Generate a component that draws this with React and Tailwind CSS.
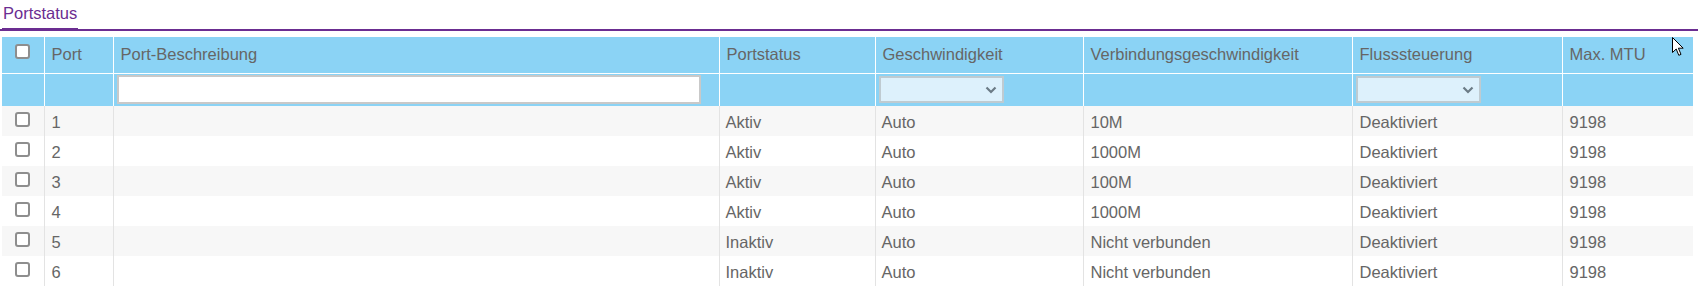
import React from "react";

const cols = [42, 69, 606, 156, 208, 269, 210, 131];

const headers = [
  "",
  "Port",
  "Port-Beschreibung",
  "Portstatus",
  "Geschwindigkeit",
  "Verbindungsgeschwindigkeit",
  "Flusssteuerung",
  "Max. MTU",
];

const ports = [
  { port: "1", status: "Aktiv", speed: "Auto", link: "10M" },
  { port: "2", status: "Aktiv", speed: "Auto", link: "1000M" },
  { port: "3", status: "Aktiv", speed: "Auto", link: "100M" },
  { port: "4", status: "Aktiv", speed: "Auto", link: "1000M" },
  { port: "5", status: "Inaktiv", speed: "Auto", link: "Nicht verbunden" },
  { port: "6", status: "Inaktiv", speed: "Auto", link: "Nicht verbunden" },
];

const Check = ({ className = "" }) => (
  <span
    className={`block w-[15px] h-[15px] rounded-[3px] border-2 border-[#8e8e8e] bg-white ${className}`}
  />
);

const FakeSelect = () => (
  <div className="w-[125px] h-[27px] bg-[#ddf1fc] border-2 border-[#bfcbd1] flex items-center justify-end pr-[5px]">
    <svg width="12" height="8" viewBox="0 0 12 8">
      <path d="M1.5 1.5 L6 6 L10.5 1.5" fill="none" stroke="#6b7b86" strokeWidth="2.2" />
    </svg>
  </div>
);

const Cursor = () => (
  <svg
    className="absolute top-[37px] left-[1672px]"
    width="13"
    height="20"
    viewBox="0 0 13 20"
  >
    <path
      d="M0.5 0.5 L0.5 15.5 L4.2 12 L6.8 18.3 L9 17.4 L6.4 11.2 L11.2 11.2 Z"
      fill="#fff"
      stroke="#000"
      strokeWidth="1"
      strokeLinejoin="round"
    />
  </svg>
);

export default function App() {
  return (
    <div
      className="relative bg-white w-[1698px] h-[287px] overflow-hidden text-[16.5px] text-[#666]"
      style={{ fontFamily: '"Liberation Sans", Arial, sans-serif' }}
    >
      {/* Tab */}
      <div className="flex border-b-2 border-[#6b2d91]">
        <div className="ml-[2px] px-[1px] pt-[4px] pb-[5px] -mb-[2px] leading-[19px] border-b-[3px] border-[#6b2d91] text-[#6b2d91]">
          Portstatus
        </div>
      </div>

      <table className="mt-[6px] ml-[2px] w-[1691px] table-fixed border-collapse">
        <colgroup>
          {cols.map((w, i) => (
            <col key={i} style={{ width: w }} />
          ))}
        </colgroup>
        <thead>
          <tr className="bg-[#8bd3f5] h-[36px]">
            {headers.map((h, i) => (
              <th
                key={i}
                className="font-normal text-left pl-[7px] border-r border-b border-white last:border-r-0 whitespace-nowrap"
              >
                {i === 0 ? (
                  <div className="flex justify-center pr-[7px]">
                    <Check className="mb-[7px]" />
                  </div>
                ) : (
                  h
                )}
              </th>
            ))}
          </tr>
          <tr className="bg-[#8bd3f5] h-[33px]">
            <td className="border-r border-white" />
            <td className="border-r border-white" />
            <td className="border-r border-white pl-[3px] align-middle">
              <div className="w-[584px] h-[29px] bg-white border-2 border-[#c9c9c9]" />
            </td>
            <td className="border-r border-white" />
            <td className="border-r border-white pl-[3px]">
              <FakeSelect />
            </td>
            <td className="border-r border-white" />
            <td className="border-r border-white pl-[3px]">
              <FakeSelect />
            </td>
            <td />
          </tr>
        </thead>
        <tbody>
          {ports.map((p, r) => (
            <tr key={p.port} className={`h-[30px] ${r % 2 === 0 ? "bg-[#f7f7f7]" : "bg-white"}`}>
              <td className="border-r border-[#e3e3e3]">
                <div className="flex justify-center">
                  <Check className="mb-[4px]" />
                </div>
              </td>
              <td className="pl-[7px] pt-[2px] border-r border-[#e3e3e3]">{p.port}</td>
              <td className="border-r border-[#e3e3e3]" />
              <td className="pl-[6px] pt-[2px] border-r border-[#e3e3e3]">{p.status}</td>
              <td className="pl-[6px] pt-[2px] border-r border-[#e3e3e3]">{p.speed}</td>
              <td className="pl-[7px] pt-[2px] border-r border-[#e3e3e3]">{p.link}</td>
              <td className="pl-[7px] pt-[2px] border-r border-[#e3e3e3]">Deaktiviert</td>
              <td className="pl-[7px] pt-[2px]">9198</td>
            </tr>
          ))}
        </tbody>
      </table>

      <Cursor />
    </div>
  );
}
